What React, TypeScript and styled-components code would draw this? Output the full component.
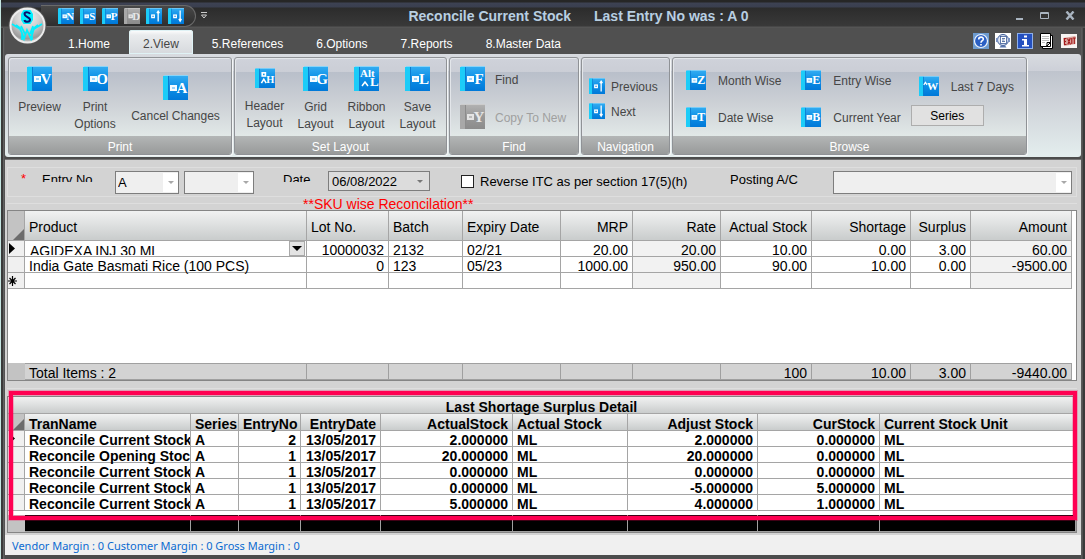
import React from "react";
import styled, { createGlobalStyle, css } from "styled-components";

const SANS = '"Liberation Sans", Arial, sans-serif';
const SERIF = '"Liberation Serif", "Times New Roman", serif';

const GlobalStyle = createGlobalStyle`
  *, *::before, *::after { box-sizing: border-box; }
  body { margin: 0; font-family: ${SANS}; font-size: 13px; color: #000; }
  button, input, select { font: inherit; color: inherit; margin: 0; }
`;

/* ---------- window frame ---------- */

const Window = styled.div`
  position: relative;
  display: flex;
  flex-direction: column;
  min-width: 1085px;
  min-height: 100vh;
  padding: 0 4px 4px 5px;
  background: linear-gradient(to right, #c5e6e2 1px, #3a3a3a 1px, #3a3a3a 3px, #686868 3px, #4c4c4c 5px, #4c4c4c calc(100% - 4px), #686868 calc(100% - 3px), #3a3a3a calc(100% - 2px));
`;

const TitleBar = styled.header`
  display: flex;
  align-items: center;
  height: 28px;
  margin: 0 -4px;
  padding: 3px 0 0 40px;
  background: linear-gradient(#262626 0, #262626 2px, #3d4253 3px, #3a3f4f 7px, #2c2c2c 8px, #393939 26px, #555 27px);
`;

const QuickAccess = styled.div`
  display: flex;
  align-items: center;
  gap: 6px;
  height: 22px;
  padding: 0 11px 0 17px;
  border: 1px solid #6a6a6a;
  border-left: 0;
  border-radius: 0 11px 11px 0;
  background: linear-gradient(#484848, #2e2e2e);
`;

const BareButton = styled.button`
  display: flex;
  align-items: center;
  justify-content: center;
  padding: 0;
  border: 0;
  background: none;
`;

const MoreButton = styled(BareButton)`
  width: 16px;
  height: 16px;
`;

const Title = styled.h1`
  display: flex;
  flex: 1;
  justify-content: center;
  gap: 23px;
  margin: 0;
  font-size: 14px;
  line-height: 20px;
  font-weight: bold;
  color: #b8cfe2;
`;

const WindowControls = styled.div`
  display: flex;
  align-items: center;
  justify-content: flex-end;
  gap: 16px;
  width: 140px;
  padding-right: 10px;
`;

const Orb = styled.button`
  position: absolute;
  left: 8px;
  top: 6px;
  width: 39px;
  height: 39px;
  padding: 0;
  border: 0;
  border-radius: 50%;
  background: none;
`;

const TabRow = styled.nav`
  display: flex;
  align-items: flex-end;
  justify-content: space-between;
  height: 26px;
  padding: 0 4px 0 49px;
  background: #505050;
`;

const Tabs = styled.div`
  display: flex;
  gap: 5px;
`;

const Tab = styled.button<{ $active?: boolean }>`
  height: 24px;
  padding: 4px 14px 0;
  border: 0;
  border-radius: 3px 3px 0 0;
  font-size: 12px;
  line-height: 20px;
  color: #fff;
  background: none;
  ${(p) =>
    p.$active &&
    css`
      color: #464646;
      background: linear-gradient(#ffffff, #e9ebed 5px, #d6d9dd);
      box-shadow: inset 0 0 0 1px #dff2f5;
    `}
`;

const HelpIcons = styled.div`
  display: flex;
  gap: 6px;
  height: 26px;
`;

/* ---------- ribbon ---------- */

const Ribbon = styled.div`
  display: flex;
  gap: 2px;
  height: 103px;
  padding: 3px;
  border-radius: 3px;
  background: linear-gradient(#d8dbe0, #cdd0d8 17px, #bfc4cd 17px, #cfd3d9 50px, #e4eeee 100%);
`;

const Group = styled.section<{ $width: number }>`
  display: flex;
  flex-direction: column;
  flex: 0 0 ${(p) => p.$width}px;
  height: 98px;
  border: 1px solid #8f9296;
  border-radius: 3px;
  box-shadow: inset 1px 1px 0 #e3e6ea, 1px 1px 0 #f4f6f6;
  overflow: hidden;
  background: linear-gradient(#cfd2da, #cbced6 14px, #b9bfca 14px, #cdd1d6 46px, #e2e9e8 79px);
`;

const GroupBody = styled.div<{ $pad?: string }>`
  display: flex;
  flex: 1;
  align-items: flex-start;
  padding: ${(p) => p.$pad ?? "8px 0 0"};
`;

const GroupCaption = styled.h2`
  height: 18px;
  margin: 0;
  font-size: 12px;
  font-weight: normal;
  line-height: 22px;
  text-align: center;
  color: #fff;
  background: linear-gradient(#b3b6b6, #989a9a);
`;

const BigButton = styled(BareButton)<{ $width: number; $center?: boolean }>`
  flex-direction: column;
  justify-content: ${(p) => (p.$center ? "center" : "flex-start")};
  gap: 8px;
  width: ${(p) => p.$width}px;
  height: ${(p) => (p.$center ? 68 : 66)}px;
  font-size: 12px;
  line-height: 17px;
  color: #464646;
`;

const IconSlot = styled.span`
  display: flex;
  align-items: center;
  height: 25px;
`;

const Stack = styled.div<{ $gap: number; $top?: number; $left?: number }>`
  display: flex;
  flex-direction: column;
  align-items: flex-start;
  gap: ${(p) => p.$gap}px;
  padding-top: ${(p) => p.$top ?? 0}px;
  padding-left: ${(p) => p.$left ?? 0}px;
`;

const RowButton = styled(BareButton)<{ $gap: number; $inset?: number }>`
  gap: ${(p) => p.$gap}px;
  padding-left: ${(p) => p.$inset ?? 0}px;
  font-size: 12px;
  line-height: 14px;
  color: #464646;
  white-space: nowrap;
  &:disabled { color: #a0a0a0; }
`;

const RowLabel = styled.span`
  padding-top: 2px;
`;

const SeriesButton = styled.button`
  width: 73px;
  height: 21px;
  padding: 2px 0 0;
  border: 1px solid #adadad;
  font-size: 12px;
  line-height: 17px;
  background: #e1e1e1;
`;

/* ---------- form ---------- */

const Main = styled.main`
  display: flex;
  flex: 1;
  flex-direction: column;
  margin-top: 2px;
  padding: 0 4px 0 2px;
  border-top: 1px solid #757575;
  background: #d3d3d3;
`;

const FormRow = styled.form`
  display: flex;
  align-items: flex-start;
  height: 30px;
  margin-top: 7px;
  padding: 3px 4px 0 13px;
  border: 1px solid #dedede;
`;

const Required = styled.span`
  width: 21px;
  line-height: 16px;
  color: #f00;
`;

const ClippedLabel = styled.label<{ $width: number }>`
  width: ${(p) => p.$width}px;
  height: 11px;
  line-height: 17px;
  overflow: hidden;
`;

const Combo = styled.span<{ $width?: number; $left?: number }>`
  display: grid;
  flex: ${(p) => (p.$width ? `0 0 ${p.$width}px` : "1")};
  height: 23px;
  margin-left: ${(p) => p.$left ?? 0}px;
  border: 1px solid #7d7d7d;
  background: #efefef;
`;

const ComboSelect = styled.select`
  grid-area: 1 / 1;
  min-width: 0;
  padding: 0 0 0 2px;
  border: 0;
  border-radius: 0;
  appearance: none;
  outline: none;
  background: transparent;
  opacity: 1;
  color: #000;
`;

const ComboArrow = styled.span`
  grid-area: 1 / 1;
  display: flex;
  align-items: center;
  justify-content: center;
  justify-self: end;
  width: 15px;
  margin: 1px 0;
  background: #fff;
  pointer-events: none;
`;

const DateBox = styled.span`
  display: flex;
  align-items: center;
  justify-content: space-between;
  width: 102px;
  height: 20px;
  padding-right: 6px;
  border: 1px solid #7d7d7d;
  background: #dcdcdc;
`;

const DateInput = styled.input`
  width: 80px;
  padding: 0 0 0 3px;
  border: 0;
  background: none;
  outline: none;
`;

const CheckLabel = styled.label`
  display: flex;
  align-items: center;
  gap: 6px;
  height: 20px;
  margin-left: 31px;
  width: 269px;
`;

const CheckBox = styled.input`
  width: 13px;
  height: 13px;
  margin: 0;
  border: 1px solid #222;
  appearance: none;
  background: #fff;
`;

const PostingLabel = styled.label`
  width: 103px;
  line-height: 18px;
`;

const NoticeRow = styled.div`
  display: flex;
  align-items: center;
  height: 13px;
`;

const Rule = styled.span<{ $width?: number }>`
  flex: ${(p) => (p.$width ? `0 0 ${p.$width}px` : "1")};
  height: 1px;
  background: #dedede;
`;

const Notice = styled.strong`
  font-size: 14px;
  line-height: 16px;
  font-weight: normal;
  color: #f00;
`;

/* ---------- grids ---------- */

const GridFrame = styled.section<{ $grow?: boolean }>`
  display: flex;
  flex-direction: column;
  flex: ${(p) => (p.$grow ? "1" : "none")};
  padding-right: ${(p) => (p.$grow ? 4 : 0)}px;
  border: 1px solid #858585;
  background: #fff;
`;

const Spacer = styled.div<{ $size?: number }>`
  flex: ${(p) => (p.$size ? `0 0 ${p.$size}px` : "1")};
`;

const Table = styled.table<{ $bold?: boolean }>`
  width: 100%;
  table-layout: fixed;
  border-spacing: 0;
  font-size: 14px;
  font-weight: ${(p) => (p.$bold ? "bold" : "normal")};
`;

const Head = styled.th<{ $height: number; $bold?: boolean }>`
  height: ${(p) => p.$height}px;
  padding: 0;
  border-right: 1px solid #a5a5a5;
  border-bottom: 1px solid #a5a5a5;
  font-weight: ${(p) => (p.$bold ? "bold" : "normal")};
  background: linear-gradient(#f1f2f2, #c9cccc);
`;

const Corner = styled.th`
  padding: 0;
  border-right: 1px solid #a5a5a5;
  border-bottom: 1px solid #a5a5a5;
  vertical-align: bottom;
  text-align: right;
  font-size: 0;
  line-height: 0;
  background: #c3c3c3;
`;

const Marker = styled.th`
  height: 16px;
  padding: 0;
  border-right: 1px solid #a5a5a5;
  border-bottom: 1px solid #a5a5a5;
  text-align: left;
  font-size: 0;
  line-height: 0;
  background: #f0f0f0;
`;

const Cell = styled.td<{ $shaded?: boolean }>`
  height: 16px;
  padding: 0;
  border-right: 1px solid #a5a5a5;
  border-bottom: 1px solid #a5a5a5;
  background: ${(p) => (p.$shaded ? "#f2f2f2" : "#fff")};
`;

const CellText = styled.div<{ $align?: string }>`
  height: 15px;
  padding: 0 4px;
  line-height: 19px;
  text-align: ${(p) => p.$align ?? "left"};
  white-space: nowrap;
  overflow-x: clip;
  overflow-y: visible;
`;

const ProductEditor = styled.div`
  display: flex;
  justify-content: space-between;
  height: 15px;
  padding: 0 1px 0 5px;
`;

const ProductText = styled.span`
  height: 14px;
  line-height: 21px;
  overflow: hidden;
`;

const DropButton = styled(BareButton)`
  width: 16px;
  height: 15px;
  border: 1px solid #a9a9a9;
  background: #e3e3e3;
`;

const TotalMarker = styled.th`
  height: 17px;
  padding: 0;
  background: #c3c3c3;
`;

const TotalCell = styled.td`
  height: 17px;
  padding: 0;
  border: solid #a0a0a0;
  border-width: 1px 1px 1px 0;
  background: #d3d3d3;
`;

const BlackCell = styled.td`
  height: 16px;
  padding: 0;
  border-right: 1px solid #a0a0a0;
  border-bottom: 1px solid #a0a0a0;
  background: #000;
`;

const DetailArea = styled.div`
  position: relative;
  margin: 7px 0 2px;
  padding-top: 7px;
  border-top: 1px solid #dedede;
`;

const Highlight = styled.div`
  position: absolute;
  left: 2px;
  right: 0;
  top: 2px;
  height: 129px;
  border: 4px solid #ff0052;
  box-shadow: 0 0 0 1px rgba(255, 0, 82, 0.25), inset 0 0 0 1px rgba(255, 0, 82, 0.25);
  pointer-events: none;
`;

const StatusBar = styled.footer`
  height: 20px;
  padding-left: 7px;
  font-family: "Noto Sans", "Open Sans", sans-serif;
  font-size: 11px;
  line-height: 22px;
  color: #0a6ad0;
  background: #f0f0f0;
`;

/* ---------- drawings ---------- */

type BookProps = { size: number; mark: string; id: string; gray?: boolean };

function BookIcon({ size, mark, id, gray }: BookProps) {
  const letter = { fontFamily: SERIF, fontWeight: 700, fill: gray ? "#e8e8e8" : "#fff" };
  return (
    <svg width={size} height={size} viewBox="0 0 25 25" aria-hidden="true">
      <defs>
        <linearGradient id={id} x1="0" y1="0" x2="0" y2="1">
          <stop offset="0" stopColor={gray ? "#b3b3b3" : "#35aef2"} />
          <stop offset="0.5" stopColor={gray ? "#999" : "#0c8ee6"} />
          <stop offset="1" stopColor={gray ? "#8b8b8b" : "#0078d8"} />
        </linearGradient>
      </defs>
      <rect x="1" width="24" height="25" fill={`url(#${id})`} />
      <rect x="1" width="24" height="1" fill={gray ? "#ccc" : "#8ad4f8"} />
      <rect y="1" width="5" height="24" fill={gray ? "#a8a8a8" : "#1cccf8"} />
      <rect x="5" y="1" width="1" height="24" fill={gray ? "#8c8c8c" : "#0c7cd0"} />
      {mark === "up" || mark === "down" ? (
        <g stroke="#fff" fill="none">
          <rect x="9" y="11" width="4" height="4" strokeWidth="2" />
          <path d={mark === "up" ? "M19 21V5M17 8L19 5l2 3" : "M19 4v16M17 17L19 20.500l2-3.500"} strokeWidth="2" />
        </g>
      ) : mark === "alt" ? (
        <>
          <text x="6" y="11" fontSize="11" style={letter}>Alt</text>
          <text x="16" y="20" fontSize="13" style={letter}>L</text>
          <path d="M8 20l3-4 3 4" stroke="#fff" strokeWidth="1.500" fill="none" />
        </>
      ) : mark === "H" ? (
        <>
          <rect x="9" y="6" width="4" height="4" stroke="#fff" strokeWidth="2" fill="none" />
          <path d="M8 19l3-5 3 5" stroke="#fff" strokeWidth="2" fill="none" />
          <text x="14" y="19" fontSize="13" style={letter}>H</text>
        </>
      ) : mark === "W" ? (
        <>
          <path d="M6 11l2-3 2 3" stroke="#fff" strokeWidth="1.500" fill="none" />
          <text x="10" y="17" fontSize="14" style={letter}>W</text>
        </>
      ) : (
        <>
          <rect x="8" y="11" width="5" height="4" stroke={gray ? "#e4e4e4" : "#f4fbff"} strokeWidth="2" fill={gray ? "#bbb" : "#9bd3f8"} />
          <text x="19" y="18" fontSize={size < 20 ? 17 : 15} textAnchor="middle" style={letter}>{mark}</text>
        </>
      )}
    </svg>
  );
}

const OrbDrawing = () => (
  <svg width="39" height="39" viewBox="0 0 39 39" aria-hidden="true">
    <defs>
      <radialGradient id="orbFill" cx="0.5" cy="0.25" r="0.8">
        <stop offset="0" stopColor="#f4f4f4" />
        <stop offset="0.45" stopColor="#cfcfcf" />
        <stop offset="0.8" stopColor="#9a9a9a" />
        <stop offset="1" stopColor="#eee" />
      </radialGradient>
    </defs>
    <circle cx="19.500" cy="19.500" r="19" fill="#555" />
    <circle cx="19.500" cy="19.500" r="17" fill="url(#orbFill)" stroke="#ececec" strokeWidth="2" />
    <path d="M15.500 4h7l2.500 4v6l-2.500 4h-7L13 14V8z" fill="#00f0ff" />
    <path d="M22 8C21 5.500 16.500 5.500 16.500 8c0 3 5.500 3 5.500 5.500 0 3-5 3-5.500 0.500" fill="none" stroke="#08106c" strokeWidth="2" />
    <path d="M4 18l8 5 2 4v7M8 19l4 3 4 11 3-9 4 9 3-11 4-3M34 18l-8 5-2 4v7M13 20l4 8M25 20l-3 8" fill="none" stroke="#00f0ff" strokeWidth="1.700" />
  </svg>
);

const ArrowDown = ({ color = "#a8a8a8", w = 6 }: { color?: string; w?: number }) => (
  <svg width={w} height={w / 2} viewBox="0 0 10 5" aria-hidden="true">
    <path d="M0 0h10L5 5z" fill={color} />
  </svg>
);

const CurrentRow = () => (
  <svg width="8" height="12" viewBox="0 0 8 12" aria-hidden="true">
    <path d="M1 0l6 5.500L1 11z" fill="#000" />
  </svg>
);

const NewRow = () => (
  <svg width="10" height="12" viewBox="0 0 10 12" aria-hidden="true">
    <path d="M4.500 1v10M0 6h9M1.500 3l6 6M7.500 3l-6 6" stroke="#000" strokeWidth="1.200" />
  </svg>
);

const CornerMark = () => (
  <svg width="11" height="11" viewBox="0 0 11 11" aria-hidden="true">
    <path d="M11 0v11H0z" fill="#6c6c6c" />
  </svg>
);

const HelpIcon = () => (
  <svg width="16" height="16" viewBox="0 0 16 16" aria-hidden="true">
    <rect width="16" height="16" fill="#6d9bd0" />
    <circle cx="8" cy="8" r="6.500" fill="#2a5fc4" stroke="#eef4fc" strokeWidth="1.200" />
    <path d="M5.700 6.500C5.700 3.300 10.500 3.500 10.300 6.200 10.200 7.700 8 7.700 8 9.700M8 11v1.600" fill="none" stroke="#fff" strokeWidth="1.600" />
  </svg>
);

const SupportIcon = () => (
  <svg width="16" height="16" viewBox="0 0 16 16" aria-hidden="true">
    <rect width="16" height="16" fill="#fff" />
    <circle cx="8" cy="7" r="5.500" fill="#dfe6f4" stroke="#3c5a96" />
    <rect x="5.500" y="3.500" width="6" height="7" fill="#fff" stroke="#3c5a96" strokeWidth="0.800" />
    <path d="M7 5.500h3M7 7h2.500M7 8.500h3" stroke="#3c5a96" strokeWidth="0.800" />
    <rect x="1" y="5" width="2" height="4" fill="#7b93c4" />
    <rect x="13" y="5" width="2" height="4" fill="#7b93c4" />
    <path d="M4.500 14.500h7l-1.500-2H6z" fill="#5a76ad" />
  </svg>
);

const InfoIcon = () => (
  <svg width="16" height="16" viewBox="0 0 16 16" aria-hidden="true">
    <rect width="16" height="16" fill="#8fb0ea" />
    <rect x="1" y="1" width="14" height="14" fill="#2450c0" />
    <path d="M7 2.500h3v2H7zM5 6h5v6h2v1.500H5V12h2V7.500H5z" fill="#fff" />
  </svg>
);

const NoteIcon = () => (
  <svg width="16" height="16" viewBox="0 0 16 16" aria-hidden="true">
    <path d="M3.500 2.500h10v13h-10z" fill="#fff" stroke="#000" />
    <path d="M1.500 0.500h10v13h-10z" fill="#fff" stroke="#000" />
    <path d="M3 3.500h7M3 5.500h7M3 7.500h7M3 9.500h3" stroke="#bbb" />
    <path d="M7.500 13.500c0.500-1 0.500-2.500 0.500-4h3.500z" fill="#eee" stroke="#000" />
  </svg>
);

const ExitIcon = () => (
  <svg width="16" height="14" viewBox="0 0 16 14" aria-hidden="true">
    <rect width="16" height="14" fill="#f8f5f3" />
    <path d="M2 4l12.500-2v8L3 12z" fill="#dba49c" />
    <path d="M5.500 4.500H3.500v6h2M3.500 7.500h1.500M6.500 4.500l3 6M9.300 4l-2.500 6.500M10.800 4v6M11.800 4h3M13.300 4v6" stroke="#a3191b" strokeWidth="1.100" fill="none" />
  </svg>
);

/* ---------- data ---------- */

const quick: [string, string, boolean?][] = [
  ["N", "New"], ["S", "Save"], ["P", "Print"], ["D", "Delete", true], ["up", "Previous"], ["down", "Next"],
];

const tabs = ["1.Home", "2.View", "5.References", "6.Options", "7.Reports", "8.Master Data"];

const layoutButtons: [string, string][] = [["H", "Header"], ["G", "Grid"], ["alt", "Ribbon"], ["L", "Save"]];

type Column = { title: string; width?: number; right?: boolean; shaded?: boolean };

const stockColumns: Column[] = [
  { title: "Product" },
  { title: "Lot No.", width: 82 },
  { title: "Batch", width: 74 },
  { title: "Expiry Date", width: 98 },
  { title: "MRP", width: 72, right: true },
  { title: "Rate", width: 88, right: true, shaded: true },
  { title: "Actual Stock", width: 91, right: true },
  { title: "Shortage", width: 99, right: true },
  { title: "Surplus", width: 60, right: true },
  { title: "Amount", width: 101, right: true, shaded: true },
];

const stockRows = [
  ["AGIDEXA INJ 30 ML", "10000032", "2132", "02/21", "20.00", "20.00", "10.00", "0.00", "3.00", "60.00"],
  ["India Gate Basmati Rice (100 PCS)", "0", "123", "05/23", "1000.00", "950.00", "90.00", "10.00", "0.00", "-9500.00"],
  ["", "", "", "", "", "", "", "", "", ""],
];

const totals = ["Total Items : 2", "", "", "", "", "", "100", "10.00", "3.00", "-9440.00"];

const detailColumns: Column[] = [
  { title: "TranName", width: 166 },
  { title: "Series", width: 48 },
  { title: "EntryNo", width: 62, right: true },
  { title: "EntryDate", width: 80, right: true },
  { title: "ActualStock", width: 132, right: true },
  { title: "Actual Stock", width: 115 },
  { title: "Adjust Stock", width: 130, right: true },
  { title: "CurStock", width: 122, right: true },
  { title: "Current Stock Unit" },
];

const detailRows = [
  ["Reconcile Current Stock", "A", "2", "13/05/2017", "2.000000", "ML", "2.000000", "0.000000", "ML"],
  ["Reconcile Opening Stock", "A", "1", "13/05/2017", "20.000000", "ML", "20.000000", "0.000000", "ML"],
  ["Reconcile Current Stock", "A", "1", "13/05/2017", "0.000000", "ML", "0.000000", "0.000000", "ML"],
  ["Reconcile Current Stock", "A", "1", "13/05/2017", "0.000000", "ML", "-5.000000", "5.000000", "ML"],
  ["Reconcile Current Stock", "A", "1", "13/05/2017", "5.000000", "ML", "4.000000", "1.000000", "ML"],
];

const Cols = ({ columns }: { columns: Column[] }) => (
  <colgroup>
    <col width={17} />
    {columns.map((c) => (
      <col key={c.title} width={c.width} />
    ))}
  </colgroup>
);

function StockGrid() {
  return (
    <GridFrame $grow>
      <Table>
        <Cols columns={stockColumns} />
        <thead>
          <tr>
            <Corner><CornerMark /></Corner>
            {stockColumns.map((c) => (
              <Head key={c.title} $height={30}>
                <CellText $align={c.right ? "right" : "left"}>{c.title}</CellText>
              </Head>
            ))}
          </tr>
        </thead>
        <tbody>
          {stockRows.map((row, r) => (
            <tr key={r}>
              <Marker>{r === 0 ? <CurrentRow /> : r === 2 ? <NewRow /> : null}</Marker>
              {row.map((value, i) => (
                <Cell key={i} $shaded={stockColumns[i].shaded}>
                  {r === 0 && i === 0 ? (
                    <ProductEditor>
                      <ProductText>{value}</ProductText>
                      <DropButton aria-label="Choose product"><ArrowDown color="#000" w={10} /></DropButton>
                    </ProductEditor>
                  ) : (
                    <CellText $align={stockColumns[i].right || i === 1 ? "right" : "left"}>{value}</CellText>
                  )}
                </Cell>
              ))}
            </tr>
          ))}
        </tbody>
      </Table>
      <Spacer />
      <Table>
        <Cols columns={stockColumns} />
        <tbody>
          <tr>
            <TotalMarker />
            {totals.map((value, i) => (
              <TotalCell key={i}>
                <CellText $align={i > 0 ? "right" : "left"}>{value}</CellText>
              </TotalCell>
            ))}
          </tr>
        </tbody>
      </Table>
    </GridFrame>
  );
}

function DetailGrid() {
  return (
    <DetailArea>
      <GridFrame>
        <Table $bold>
          <Cols columns={detailColumns} />
          <thead>
            <tr>
              <Head $height={17} $bold colSpan={10}>
                <CellText $align="center">Last Shortage Surplus Detail</CellText>
              </Head>
            </tr>
            <tr>
              <Corner><CornerMark /></Corner>
              {detailColumns.map((c) => (
                <Head key={c.title} $height={17} $bold>
                  <CellText $align={c.right ? "right" : "left"}>{c.title}</CellText>
                </Head>
              ))}
            </tr>
          </thead>
          <tbody>
            {detailRows.map((row, r) => (
              <tr key={r}>
                <Marker>{r === 0 ? <CurrentRow /> : null}</Marker>
                {row.map((value, i) => (
                  <Cell key={i}>
                    <CellText $align={detailColumns[i].right ? "right" : "left"}>{value}</CellText>
                  </Cell>
                ))}
              </tr>
            ))}
          </tbody>
        </Table>
        <Spacer $size={4} />
        <Table>
          <Cols columns={detailColumns} />
          <tbody>
            <tr>
              <TotalMarker />
              {detailColumns.map((c) => (
                <BlackCell key={c.title} />
              ))}
            </tr>
          </tbody>
        </Table>
      </GridFrame>
      <Highlight />
    </DetailArea>
  );
}

export default function App() {
  return (
    <>
      <GlobalStyle />
      <Window>
        <TitleBar>
          <QuickAccess>
            {quick.map(([mark, label, gray]) => (
              <BareButton key={mark} aria-label={label} disabled={gray}>
                <BookIcon size={16} mark={mark} id={`quick-${mark}`} gray={gray} />
              </BareButton>
            ))}
          </QuickAccess>
          <MoreButton aria-label="Customize toolbar">
            <svg width="6" height="7" viewBox="0 0 6 7" aria-hidden="true">
              <path d="M0 0.500h6" stroke="#ccc" />
              <path d="M0.500 3h5L3 6z" fill="none" stroke="#ccc" />
            </svg>
          </MoreButton>
          <Title><span>Reconcile Current Stock</span><span>Last Entry No was : A 0</span></Title>
          <WindowControls>
            <BareButton aria-label="Minimize">
              <svg width="9" height="10" viewBox="0 0 9 10"><path d="M1 8h7" stroke="#a9b4c0" strokeWidth="2" /></svg>
            </BareButton>
            <BareButton aria-label="Maximize">
              <svg width="9" height="8" viewBox="0 0 9 8"><path d="M0.500 0.500h8v6h-8zM0 1.500h9" fill="none" stroke="#a9b4c0" /></svg>
            </BareButton>
            <BareButton aria-label="Close">
              <svg width="10" height="9" viewBox="0 0 10 9"><path d="M1.500 0.500l7 8M8.500 0.500l-7 8" stroke="#a9b4c0" strokeWidth="2.400" /></svg>
            </BareButton>
          </WindowControls>
        </TitleBar>
        <Orb aria-label="Application menu"><OrbDrawing /></Orb>

        <TabRow>
          <Tabs>
            {tabs.map((t) => (
              <Tab key={t} $active={t === "2.View"}>{t}</Tab>
            ))}
          </Tabs>
          <HelpIcons>
            <BareButton aria-label="Help"><HelpIcon /></BareButton>
            <BareButton aria-label="Support"><SupportIcon /></BareButton>
            <BareButton aria-label="Information"><InfoIcon /></BareButton>
            <BareButton aria-label="Notes"><NoteIcon /></BareButton>
            <BareButton aria-label="Exit"><ExitIcon /></BareButton>
          </HelpIcons>
        </TabRow>

        <Ribbon>
          <Group $width={224}>
            <GroupBody>
              <BigButton $width={61}><IconSlot><BookIcon size={25} mark="V" id="bV" /></IconSlot>Preview</BigButton>
              <BigButton $width={50}><IconSlot><BookIcon size={25} mark="O" id="bO" /></IconSlot>Print Options</BigButton>
              <BigButton $width={111} $center><IconSlot><BookIcon size={25} mark="A" id="bA" /></IconSlot>Cancel Changes</BigButton>
            </GroupBody>
            <GroupCaption>Print</GroupCaption>
          </Group>
          <Group $width={213}>
            <GroupBody $pad="8px 0 0 4px">
              {layoutButtons.map(([mark, label]) => (
                <BigButton key={mark} $width={51}>
                  <IconSlot><BookIcon size={mark === "H" ? 20 : 25} mark={mark} id={`lay-${mark}`} /></IconSlot>
                  {label} Layout
                </BigButton>
              ))}
            </GroupBody>
            <GroupCaption>Set Layout</GroupCaption>
          </Group>
          <Group $width={130}>
            <GroupBody $pad="8px 0 0 10px">
              <Stack $gap={13}>
                <RowButton $gap={10}><BookIcon size={25} mark="F" id="bF" /><RowLabel>Find</RowLabel></RowButton>
                <RowButton $gap={10} disabled><BookIcon size={25} mark="Y" id="bY" gray /><RowLabel>Copy To New</RowLabel></RowButton>
              </Stack>
            </GroupBody>
            <GroupCaption>Find</GroupCaption>
          </Group>
          <Group $width={89}>
            <GroupBody $pad="20px 0 0 7px">
              <Stack $gap={9}>
                <RowButton $gap={6}><BookIcon size={16} mark="up" id="navUp" /><RowLabel>Previous</RowLabel></RowButton>
                <RowButton $gap={6}><BookIcon size={16} mark="down" id="navDown" /><RowLabel>Next</RowLabel></RowButton>
              </Stack>
            </GroupBody>
            <GroupCaption>Navigation</GroupCaption>
          </Group>
          <Group $width={355}>
            <GroupBody $pad="12px 0 0 13px">
              <Stack $gap={17}>
                <RowButton $gap={12}><BookIcon size={20} mark="Z" id="bZ" /><RowLabel>Month Wise</RowLabel></RowButton>
                <RowButton $gap={12}><BookIcon size={20} mark="T" id="bT" /><RowLabel>Date Wise</RowLabel></RowButton>
              </Stack>
              <Stack $gap={17} $left={20}>
                <RowButton $gap={12}><BookIcon size={20} mark="E" id="bE" /><RowLabel>Entry Wise</RowLabel></RowButton>
                <RowButton $gap={12}><BookIcon size={20} mark="B" id="bB" /><RowLabel>Current Year</RowLabel></RowButton>
              </Stack>
              <Stack $gap={9} $top={6} $left={10}>
                <RowButton $gap={12} $inset={8}><BookIcon size={20} mark="W" id="bW" /><RowLabel>Last 7 Days</RowLabel></RowButton>
                <SeriesButton>Series</SeriesButton>
              </Stack>
            </GroupBody>
            <GroupCaption>Browse</GroupCaption>
          </Group>
        </Ribbon>

        <Main>
          <FormRow>
            <Required>*</Required>
            <ClippedLabel htmlFor="entry-series" $width={73}>Entry No</ClippedLabel>
            <Combo $width={64}>
              <ComboSelect id="entry-series"><option>A</option></ComboSelect>
              <ComboArrow><ArrowDown /></ComboArrow>
            </Combo>
            <Combo $width={70} $left={5}>
              <ComboSelect aria-label="Entry number"><option></option></ComboSelect>
              <ComboArrow><ArrowDown /></ComboArrow>
            </Combo>
            <Spacer $size={29} />
            <ClippedLabel htmlFor="entry-date" $width={45}>Date</ClippedLabel>
            <DateBox>
              <DateInput id="entry-date" defaultValue="06/08/2022" />
              <ArrowDown color="#777" />
            </DateBox>
            <CheckLabel>
              <CheckBox type="checkbox" />
              Reverse ITC as per section 17(5)(h)
            </CheckLabel>
            <PostingLabel htmlFor="posting">Posting A/C</PostingLabel>
            <Combo>
              <ComboSelect id="posting"><option></option></ComboSelect>
              <ComboArrow><ArrowDown /></ComboArrow>
            </Combo>
          </FormRow>
          <NoticeRow>
            <Rule $width={296} />
            <Notice>**SKU wise Reconcilation**</Notice>
            <Rule />
          </NoticeRow>
          <StockGrid />
          <DetailGrid />
        </Main>
        <StatusBar>Vendor Margin : 0 Customer Margin : 0 Gross Margin : 0</StatusBar>
      </Window>
    </>
  );
}
